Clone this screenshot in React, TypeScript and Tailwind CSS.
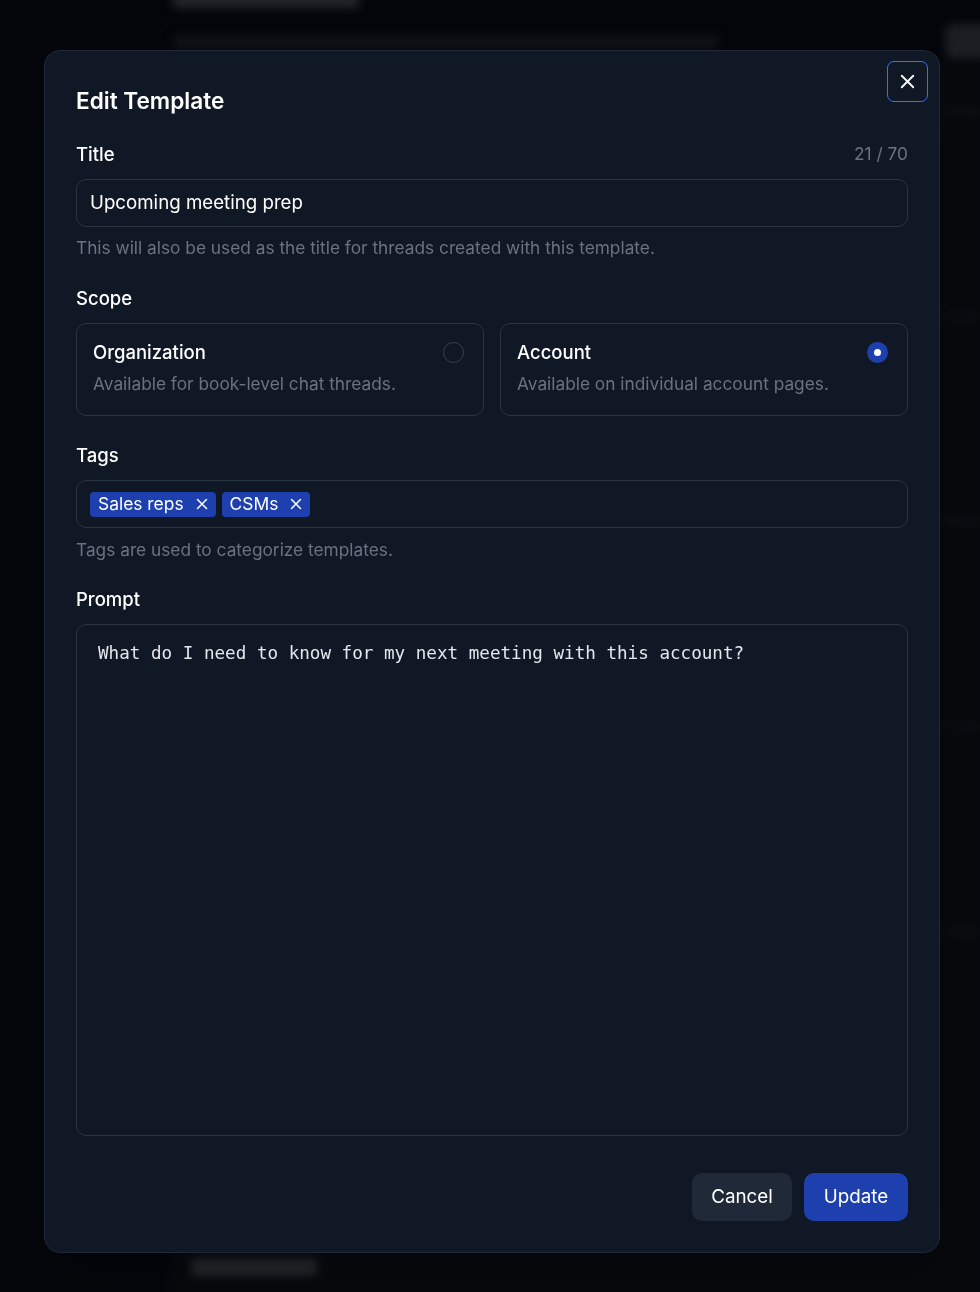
import { X } from 'lucide-react'

const font = { fontFamily: 'Inter, "Noto Sans", sans-serif' }

function Background() {
  return (
    <div className="flex h-full w-full bg-[#04070d]">
      <div className="w-[169px] shrink-0" />
      <div className="relative flex-1 blur-[4px]">
        <div className="pl-[4px]">
          <div className="-mt-[12px] h-[20px] w-[186px] rounded bg-[#2a2d33]" />
          <div className="mt-[27px] h-[14px] w-[545px] rounded bg-[#13161b]" />
        </div>
        <div className="mt-[10px] h-full bg-[#080b10]">
          <div className="flex flex-col gap-[200px] pt-[50px] pl-[775px]">
            <div className="h-[5px] w-[40px] rounded bg-[#12151a]" />
            <div className="h-[5px] w-[40px] rounded bg-[#101318]" />
            <div className="h-[5px] w-[40px] rounded bg-[#12151a]" />
            <div className="h-[5px] w-[40px] rounded bg-[#101318]" />
            <div className="h-[5px] w-[40px] rounded bg-[#12151a]" />
          </div>
        </div>
        <div className="absolute top-[1258px] left-[22px] h-[18px] w-[126px] rounded bg-[#2b2d31]" />
        <div className="absolute top-[24px] left-[776px] h-[34px] w-[60px] rounded-lg bg-[#23262d]" />
      </div>
    </div>
  )
}

function Radio({ checked }: { checked: boolean }) {
  if (checked) {
    return (
      <span className="flex h-[21px] w-[21px] items-center justify-center rounded-full bg-[#1e40af]">
        <span className="block h-[7px] w-[7px] rounded-full bg-white" />
      </span>
    )
  }
  return <span className="block h-[21px] w-[21px] rounded-full border border-[#374151]" />
}

function ScopeCard({ title, desc, checked }: { title: string; desc: string; checked: boolean }) {
  return (
    <div className="flex h-[93px] flex-1 items-start justify-between rounded-[10px] border border-[#2b3442] pt-[16px] pr-[19px] pl-[16px]">
      <div>
        <div className="text-[18.5px] leading-[24px] font-medium text-white">{title}</div>
        <div className="mt-[8px] text-[17.3px] leading-[24px] text-[#6b7280]">{desc}</div>
      </div>
      <div className="pt-[2px]">
        <Radio checked={checked} />
      </div>
    </div>
  )
}

// small remove cross inside a tag chip
function ChipX() {
  return (
    <svg width="12" height="12" viewBox="0 0 12 12" fill="none" stroke="currentColor" strokeWidth="1.5" strokeLinecap="round">
      <path d="M1.5 1.5 10.5 10.5M10.5 1.5 1.5 10.5" />
    </svg>
  )
}

function Tag({ label }: { label: string }) {
  return (
    <span className="flex h-[25px] items-center gap-[12px] rounded-[4px] bg-[#1e40af] pr-[8px] pl-[8px] text-[17.4px] text-white">
      {label}
      <ChipX />
    </span>
  )
}

export default function App() {
  return (
    <div className="relative h-[1292px] w-full overflow-hidden" style={font}>
      <Background />
      <div className="absolute inset-0 bg-black/20 pt-[50px] pl-[44px]">
        <div className="relative flex h-[1203px] w-[896px] flex-col rounded-[16px] border border-[#1f2937] bg-[#101826] px-[31px] pt-[37px] pb-[31px] shadow-2xl">
          <button
            type="button"
            className="absolute top-[10px] right-[11px] flex h-[41px] w-[41px] items-center justify-center rounded-[7px] border border-[#3b74e0] text-white"
          >
            <X size={23} strokeWidth={1.9} />
          </button>

          <h2 className="text-[22.6px] leading-[26px] font-semibold text-white">Edit Template</h2>

          <div className="mt-[28px] flex h-[24px] items-center justify-between">
            <span className="text-[18.5px] leading-[24px] font-medium text-white">Title</span>
            <span className="text-[17.3px] leading-[24px] text-[#6b7280]">21 / 70</span>
          </div>
          <div className="mt-[13px] flex h-[48px] items-center rounded-[10px] border border-[#2b3442] px-[13px] pt-[1px] text-[18.7px] text-white">
            Upcoming meeting prep
          </div>
          <p className="mt-[9px] text-[17.3px] leading-[24px] text-[#6b7280]">
            This will also be used as the title for threads created with this template.
          </p>

          <div className="mt-[26px] text-[18.5px] leading-[24px] font-medium text-white">Scope</div>
          <div className="mt-[13px] flex gap-[16px]">
            <ScopeCard title="Organization" desc="Available for book-level chat threads." checked={false} />
            <ScopeCard title="Account" desc="Available on individual account pages." checked />
          </div>

          <div className="mt-[27px] text-[18.5px] leading-[24px] font-medium text-white">Tags</div>
          <div className="mt-[13px] flex h-[48px] items-center gap-[6px] rounded-[10px] border border-[#2b3442] px-[13px]">
            <Tag label="Sales reps" />
            <Tag label="CSMs" />
          </div>
          <p className="mt-[10px] text-[17.3px] leading-[24px] text-[#6b7280]">Tags are used to categorize templates.</p>

          <div className="mt-[25px] text-[18.5px] leading-[24px] font-medium text-white">Prompt</div>
          <div
            className="mt-[13px] h-[512px] rounded-[10px] border border-[#2b3442] px-[21px] pt-[15px] text-[17.6px] text-[#e5e7eb]"
            style={{ fontFamily: '"DejaVu Sans Mono", monospace' }}
          >
            What do I need to know for my next meeting with this account?
          </div>

          <div className="mt-auto flex justify-end gap-[12px]">
            <button
              type="button"
              className="h-[48px] w-[100px] rounded-[10px] bg-[#1f2937] text-[18.8px] text-white"
            >
              Cancel
            </button>
            <button
              type="button"
              className="h-[48px] w-[104px] rounded-[10px] bg-[#1e40af] text-[18.8px] text-white"
            >
              Update
            </button>
          </div>
        </div>
      </div>
    </div>
  )
}
